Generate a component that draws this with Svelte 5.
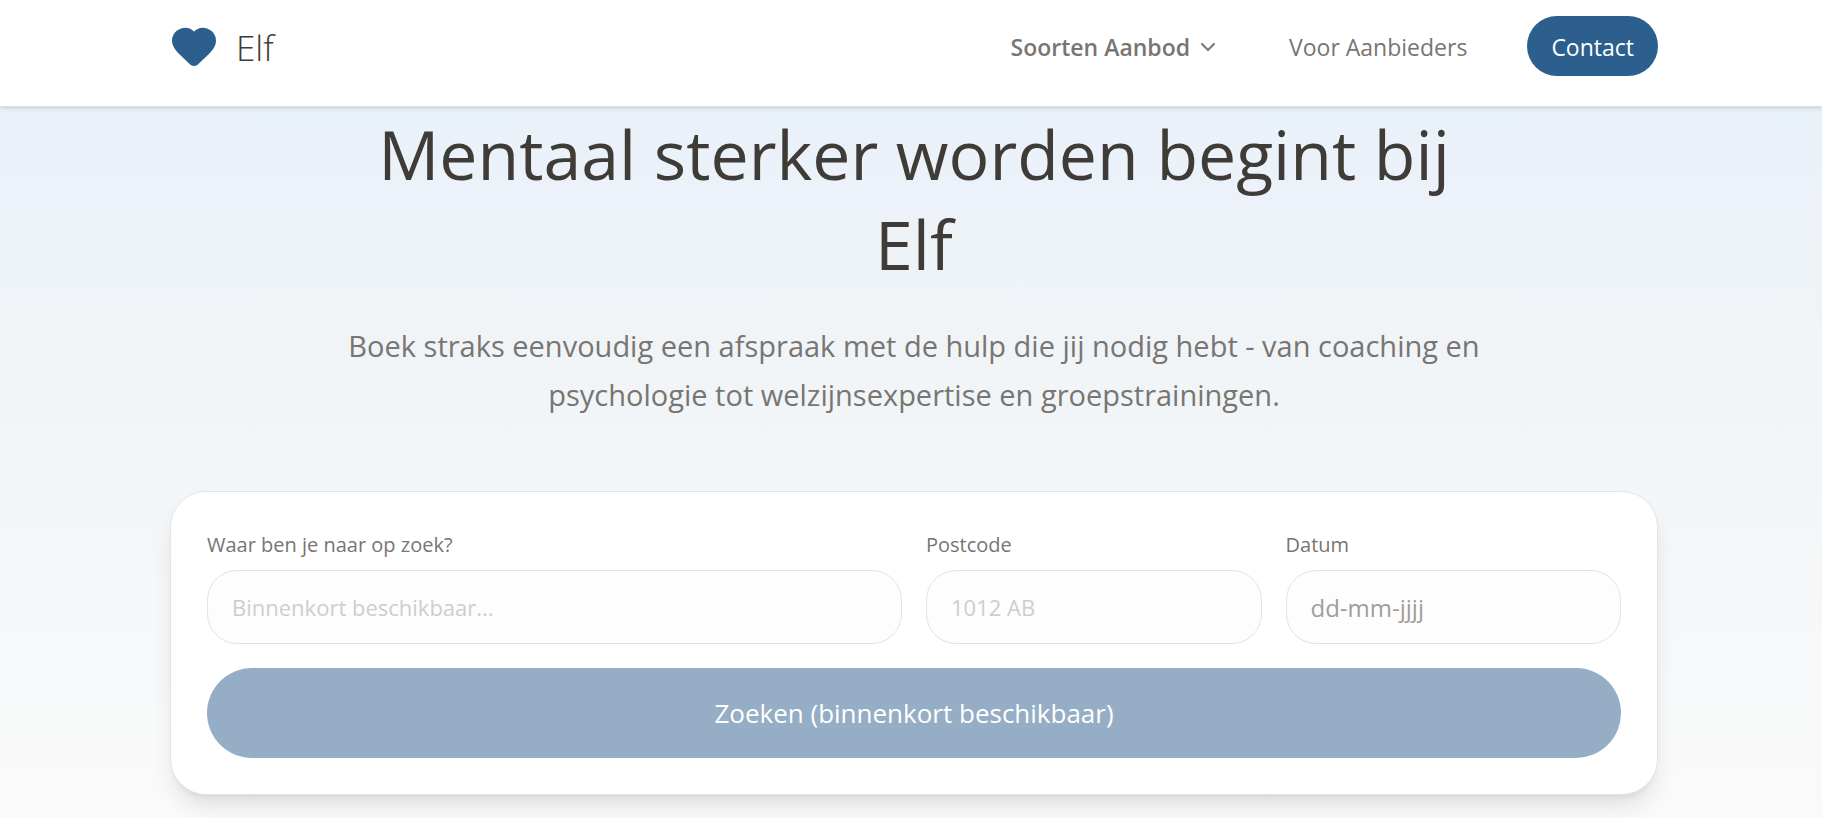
<script>
  const fields = [
    { id: 'zoek', label: 'Waar ben je naar op zoek?', placeholder: 'Binnenkort beschikbaar...', kind: 'wide' },
    { id: 'postcode', label: 'Postcode', placeholder: '1012 AB', kind: '' },
    { id: 'datum', label: 'Datum', placeholder: 'dd-mm-jjjj', kind: 'date' }
  ];
</script>

<div class="page">
  <header>
    <div class="container bar">
      <a class="brand" href="/">
        <svg viewBox="0 0 24 24" width="48" height="48" fill="currentColor" stroke="currentColor" stroke-width="2" stroke-linecap="round" stroke-linejoin="round" aria-hidden="true">
          <path d="M2 9.5a5.5 5.5 0 0 1 9.591-3.676.56.56 0 0 0 .818 0A5.49 5.49 0 0 1 22 9.5c0 2.29-1.5 4-3 5.5l-5.492 5.313a2 2 0 0 1-3 .019L5 15c-1.5-1.5-3-3.2-3-5.5" />
        </svg>
        <span>Elf</span>
      </a>
      <nav>
        <button class="menu" type="button">
          Soorten Aanbod
          <svg viewBox="0 0 24 24" width="24" height="24" fill="none" stroke="currentColor" stroke-width="2" stroke-linecap="round" stroke-linejoin="round" aria-hidden="true">
            <path d="m6 9 6 6 6-6" />
          </svg>
        </button>
        <a class="link" href="/aanbieders">Voor Aanbieders</a>
        <a class="contact" href="/contact">Contact</a>
      </nav>
    </div>
  </header>

  <main>
    <div class="container">
      <div class="intro">
        <h1>Mentaal sterker worden begint bij Elf</h1>
        <p>Boek straks eenvoudig een afspraak met de hulp die jij nodig hebt - van coaching en psychologie tot welzijnsexpertise en groepstrainingen.</p>
      </div>
      <form>
        {#each fields as field}
          <div class="field {field.kind}">
            <label for={field.id}>{field.label}</label>
            <input id={field.id} type="text" placeholder={field.placeholder} disabled />
          </div>
        {/each}
        <button class="search" type="submit" disabled>Zoeken (binnenkort beschikbaar)</button>
      </form>
    </div>
  </main>
</div>

<style>
  :global(body) {
    margin: 0;
    background: #fafafa;
  }
  .page {
    font-family: "Open Sans", "Noto Sans", sans-serif;
    color: #787572;
    min-height: 100vh;
    overflow: hidden;
    box-sizing: border-box;
  }
  .page * {
    box-sizing: border-box;
  }
  .container {
    max-width: 1488px;
    margin: 0 auto;
    position: relative;
    left: 3px;
  }
  header {
    position: relative;
    z-index: 1;
    background: #fff;
    border-bottom: 1px solid #e0dfdd;
    box-shadow: 0 1px 4px rgba(0, 0, 0, 0.16);
  }
  .bar {
    display: flex;
    justify-content: space-between;
    align-items: flex-start;
    padding: 16px 0 30px;
  }
  .brand {
    display: flex;
    align-items: center;
    gap: 18px;
    height: 60px;
    color: #2c5f8d;
    text-decoration: none;
  }
  .brand span {
    padding-top: 4px;
    color: #3f3b36;
    font-size: 35px;
    font-weight: 300;
    line-height: 48px;
  }
  nav {
    display: flex;
    align-items: center;
    gap: 60px;
    font-size: 23px;
    line-height: 36px;
  }
  nav a {
    padding-top: 2px;
    color: inherit;
    text-decoration: none;
  }
  .menu {
    display: flex;
    align-items: center;
    gap: 6px;
    padding: 2px 9px 0 0;
    border: 0;
    background: none;
    color: inherit;
    font: inherit;
    font-weight: 600;
  }
  nav .contact {
    padding: 13px 24px 11px;
    border-radius: 30px;
    background: #2c5f8d;
    color: #fff;
  }
  main {
    min-height: 711px;
    padding-bottom: 24px;
    background: linear-gradient(#e9f1f9, #edf2fa 100px, #eef3f7 140px, #fafafa 711px);
  }
  .intro {
    max-width: 1152px;
    margin: 0 auto;
    padding-top: 2px;
    text-align: center;
  }
  h1 {
    margin: 0;
    color: #3f3b36;
    font-size: 68px;
    font-weight: 400;
    line-height: 90px;
  }
  p {
    margin: 32px 0 72px;
    font-size: 29px;
    line-height: 49px;
  }
  form {
    display: grid;
    grid-template-columns: repeat(4, 1fr);
    gap: 24px;
    padding: 36px;
    border: 1px solid #e6e4e0;
    border-radius: 36px;
    background: #fff;
    box-shadow: 0 15px 22px -4px rgba(0, 0, 0, 0.1), 0 6px 9px -6px rgba(0, 0, 0, 0.1);
  }
  .wide {
    grid-column: span 2;
  }
  label {
    display: block;
    margin-bottom: 8px;
    font-size: 20px;
    line-height: 34px;
  }
  input {
    display: block;
    width: 100%;
    height: 74px;
    padding: 0 24px;
    border: 1px solid #e4e3df;
    border-radius: 30px;
    background: #fdfdfd;
    font: inherit;
    font-size: 22px;
  }
  input::placeholder {
    color: #cfcdcc;
    opacity: 1;
  }
  .date input {
    font-size: 24px;
  }
  .date input::placeholder {
    color: #a09d9b;
  }
  .search {
    grid-column: 1 / -1;
    height: 90px;
    border: 0;
    border-radius: 45px;
    background: #96adc6;
    color: #fff;
    font: inherit;
    font-size: 26px;
  }
</style>
